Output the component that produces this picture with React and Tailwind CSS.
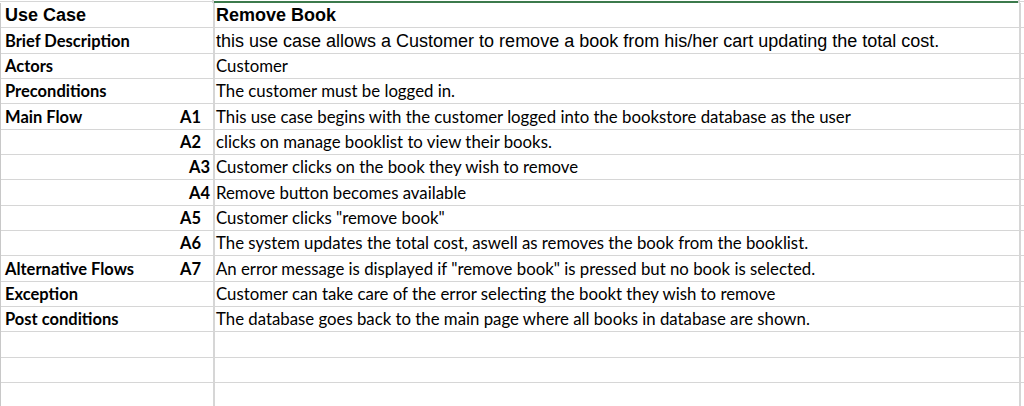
import React from "react";

const rows = [
  { label: "Use Case", code: "", codeTight: false, text: "Remove Book", head: true },
  { label: "Brief Description", code: "", text: "this use case allows a Customer to remove a book from his/her cart updating the total cost.", arial: true },
  { label: "Actors", code: "", text: "Customer" },
  { label: "Preconditions", code: "", text: "The customer must be logged in." },
  { label: "Main Flow", code: "A1", text: "This use case begins with the customer logged into the bookstore database as the user" },
  { label: "", code: "A2", text: "clicks on manage booklist to view their books." },
  { label: "", code: "A3", codeTight: true, text: "Customer clicks on the book they wish to remove" },
  { label: "", code: "A4", codeTight: true, text: "Remove button becomes available" },
  { label: "", code: "A5", text: 'Customer clicks "remove book"' },
  { label: "", code: "A6", text: "The system updates the total cost, aswell as removes the book from the booklist." },
  { label: "Alternative Flows", code: "A7", text: 'An error message is displayed if "remove book" is pressed but no book is selected.' },
  { label: "Exception", code: "", text: "Customer can take care of the error selecting the bookt they wish to remove" },
  { label: "Post conditions", code: "", text: "The database goes back to the main page where all books in database are shown." },
  { label: "", code: "", text: "" },
  { label: "", code: "", text: "" },
  { label: "", code: "", text: "" },
];

// no Calibri in the sandbox, Lato is the closest fit
const calibri = { fontFamily: "Lato, 'Open Sans', sans-serif" };
const arial = { fontFamily: "'Liberation Sans', Arial, sans-serif" };

function Row({ row }) {
  return (
    <div className="flex h-[25.35px] border-b border-[#d6d6d6] text-black">
      <div className="w-[212px] shrink-0 flex items-end justify-between pl-[4px] pb-[1px] overflow-hidden">
        {row.head ? (
          <span className="text-[18px] font-bold leading-[22px]" style={arial}>{row.label}</span>
        ) : (
          <span className="text-[16.5px] font-bold leading-[22px] whitespace-nowrap" style={calibri}>{row.label}</span>
        )}
        {row.code && (
          <span className={`text-[16.5px] font-bold leading-[22px] ${row.codeTight ? "pr-[3px]" : "pr-[12px]"}`} style={calibri}>
            {row.code}
          </span>
        )}
      </div>
      <div className="w-[2px] shrink-0 bg-[#d6d6d6]" />
      <div className="w-[804px] shrink-0 flex items-end pl-[1px] pb-[1px] overflow-hidden whitespace-nowrap">
        {row.head ? (
          <span className="text-[18px] font-bold leading-[22px]" style={arial}>{row.text}</span>
        ) : row.arial ? (
          <span className="text-[18px] leading-[22px]" style={arial}>{row.text}</span>
        ) : (
          <span className="text-[16.8px] leading-[22px]" style={calibri}>{row.text}</span>
        )}
      </div>
      <div className="w-[2px] shrink-0 bg-[#d6d6d6]" />
      <div className="flex-1" />
    </div>
  );
}

export default function App() {
  return (
    <div className="w-[1024px] h-[406px] overflow-hidden bg-white">
      <div className="flex h-[3px]">
        <div className="w-[212px] shrink-0 mt-[1px] h-[1px] bg-[#d6d6d6]" />
        <div className="w-[2px] shrink-0 bg-[#d6d6d6]" />
        <div className="w-[804px] shrink-0 mt-[1px] h-[2px] bg-[#3c7a4c]" />
        <div className="w-[2px] shrink-0 bg-[#d6d6d6]" />
        <div className="flex-1 mt-[1px] h-[1px] bg-[#d6d6d6]" />
      </div>
      <div className="border-l border-[#c8c8c8]">
        {rows.map((row, i) => (
          <Row key={i} row={row} />
        ))}
      </div>
    </div>
  );
}
